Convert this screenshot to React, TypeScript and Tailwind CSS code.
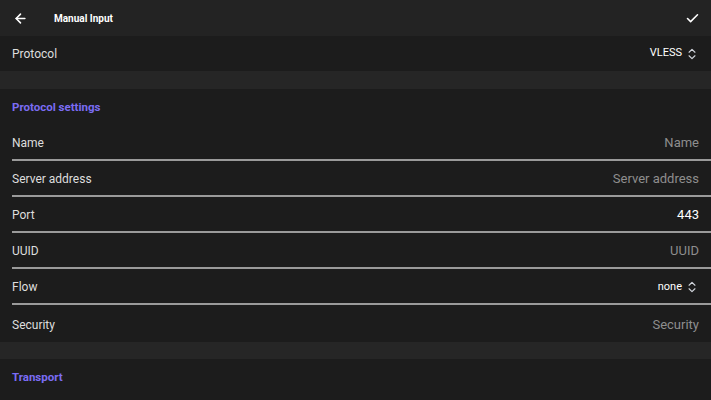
import { ArrowLeft, Check, ChevronsUpDown } from "lucide-react";

const fields = [
  { label: "Name", value: "Name", placeholder: true },
  { label: "Server address", value: "Server address", placeholder: true },
  { label: "Port", value: "443", placeholder: false },
  { label: "UUID", value: "UUID", placeholder: true },
  { label: "Flow", value: "none", select: true },
];

function Selector({ value }: { value: string }) {
  return (
    <div className="flex items-center gap-[3px] text-[11px] text-white">
      <span>{value}</span>
      <ChevronsUpDown size={14} strokeWidth={2} className="text-gray-300" />
    </div>
  );
}

export default function App() {
  return (
    <div
      className="h-[400px] w-[711px] overflow-hidden bg-[#1c1c1c] text-[#dedede]"
      style={{ fontFamily: "Roboto, 'Noto Sans', sans-serif" }}
    >
      <header className="flex h-[36px] items-center bg-[#232323] pl-[13px] pr-[11px]">
        <ArrowLeft size={15} strokeWidth={2.5} className="text-white" />
        <span className="ml-[26px] text-[10px] font-bold text-white">Manual Input</span>
        <Check size={15} strokeWidth={2.5} className="ml-auto text-white" />
      </header>

      <div className="flex h-[35px] items-center justify-between pl-3 pr-3 text-[12px]">
        <span>Protocol</span>
        <Selector value="VLESS" />
      </div>

      <div className="h-[18px] bg-[#262626]" />

      <div className="flex h-[36px] items-center pl-3 pt-[2px] text-[11.5px] font-bold text-[#7b6cf3]">
        Protocol settings
      </div>

      {fields.map((f) => (
        <div key={f.label} className="ml-3 flex h-[36px] items-center justify-between border-b-2 border-[#9a9a9a] pr-3 pt-[2px] text-[12px]">
          <span>{f.label}</span>
          {f.select ? (
            <Selector value={f.value} />
          ) : (
            <span className={f.placeholder ? "text-[13px] text-[#8e8e8e]" : "text-[13px] text-white"}>{f.value}</span>
          )}
        </div>
      ))}

      <div className="flex h-[37px] items-center justify-between pl-3 pr-3 pt-[2px] text-[12px]">
        <span>Security</span>
        <span className="text-[13px] text-[#8e8e8e]">Security</span>
      </div>

      <div className="h-[17px] bg-[#262626]" />

      <div className="flex h-[36px] items-center pl-3 pt-[2px] text-[11.5px] font-bold text-[#7b6cf3]">
        Transport
      </div>
    </div>
  );
}
